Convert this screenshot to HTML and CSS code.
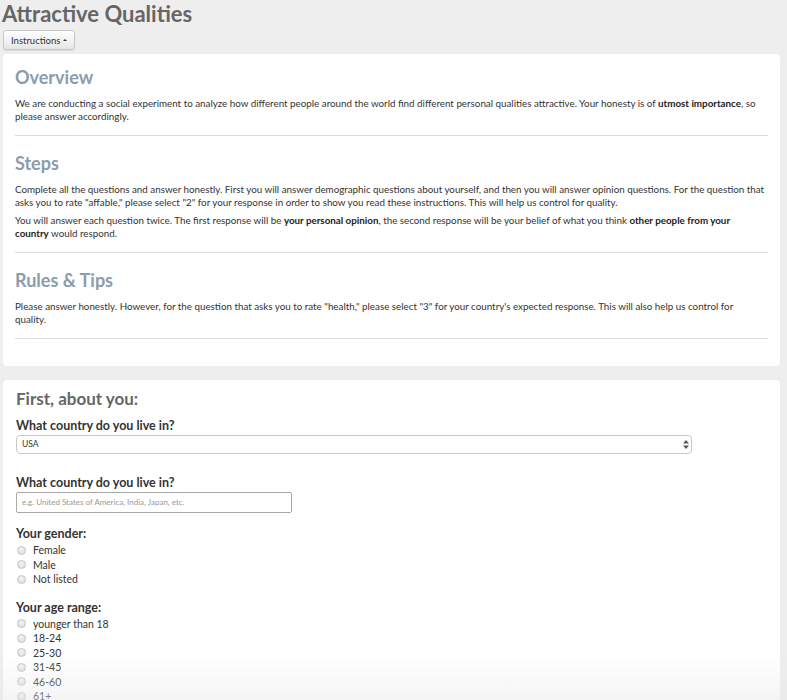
FILE: index.html
```html
<!DOCTYPE html>
<html>
<head>
<meta charset="utf-8">
<link rel="stylesheet" href="styles.css">
</head>
<body>
<div class="page">
  <h1 class="title">Attractive Qualities</h1>
  <button class="btn">Instructions <span class="caret"></span></button>

  <div class="panel panel-instr">
    <h2 class="sec-head">Overview</h2>
    <p>We are conducting a social experiment to analyze how different people around the world find different personal qualities attractive. Your honesty is of <b>utmost importance</b>, so please answer accordingly.</p>
    <hr>
    <h2 class="sec-head">Steps</h2>
    <p>Complete all the questions and answer honestly. First you will answer demographic questions about yourself, and then you will answer opinion questions. For the question that asks you to rate "affable," please select "2" for your response in order to show you read these instructions. This will help us control for quality.</p>
    <p>You will answer each question twice. The first response will be <b>your personal opinion</b>, the second response will be your belief of what you think <b>other people from your country</b> would respond.</p>
    <hr>
    <h2 class="sec-head">Rules &amp; Tips</h2>
    <p>Please answer honestly. However, for the question that asks you to rate "health," please select "3" for your country's expected response. This will also help us control for quality.</p>
    <hr>
  </div>

  <div class="panel panel-form">
    <h2 class="form-head">First, about you:</h2>

    <div class="q q-first">
      <label class="q-label">What country do you live in?</label>
      <div class="select-wrap">
        <div class="select">USA</div>
        <svg class="arrows" width="6" height="9" viewBox="0 0 6 9"><path d="M3 0 L6 3.5 L0 3.5 Z M3 9 L6 5.5 L0 5.5 Z" fill="#555"/></svg>
      </div>
    </div>

    <div class="q q-text">
      <label class="q-label">What country do you live in?</label>
      <div class="input">e.g. United States of America, India, Japan, etc.</div>
    </div>

    <div class="q q-after-input">
      <label class="q-label">Your gender:</label>
      <div class="radio"><span class="dot"></span>Female</div>
      <div class="radio"><span class="dot"></span>Male</div>
      <div class="radio"><span class="dot"></span>Not listed</div>
    </div>

    <div class="q q-after-radio">
      <label class="q-label">Your age range:</label>
      <div class="radio"><span class="dot"></span>younger than 18</div>
      <div class="radio"><span class="dot"></span>18-24</div>
      <div class="radio"><span class="dot"></span>25-30</div>
      <div class="radio"><span class="dot"></span>31-45</div>
      <div class="radio"><span class="dot"></span>46-60</div>
      <div class="radio"><span class="dot"></span>61+</div>
    </div>
  </div>
</div>
<div class="fade"></div>
</body>
</html>
```

FILE: styles.css
```css
html, body {
  margin: 0;
  padding: 0;
}
body {
  background: #eeeeee;
  font-family: Lato, "Open Sans", sans-serif;
  color: #333;
  overflow: hidden;
}
.page {
  padding: 0 7px 0 3px;
}
.title {
  margin: 0;
  margin-left: -1px;
  font-size: 22px;
  line-height: 27px;
  font-weight: 700;
  color: #666;
}
.btn {
  display: inline-flex;
  align-items: center;
  gap: 3px;
  margin-top: 3px;
  height: 20px;
  padding: 0 7px;
  font-family: Lato, sans-serif;
  font-size: 9.5px;
  color: #333;
  background: linear-gradient(#ffffff, #e6e6e6);
  border: 1px solid #c8c8c8;
  border-radius: 3px;
  box-shadow: 0 1px 1px rgba(0,0,0,0.08);
}
.caret {
  width: 0;
  height: 0;
  border-left: 2px solid transparent;
  border-right: 2px solid transparent;
  border-bottom: 2px solid #333;
}
.panel {
  background: #fff;
  border-radius: 4px;
}
.panel-instr {
  margin-top: 4px;
  padding: 11px 12px 27px 12px;
}
.sec-head {
  margin: 0;
  font-size: 18px;
  line-height: 24px;
  font-weight: 700;
  color: #8b9cac;
}
.panel-instr p {
  margin: 8px 3px 0 0;
  font-size: 9.8px;
  line-height: 13px;
}
.panel-instr p + p {
  margin-top: 5px;
}
.panel-instr b {
  color: #222;
}
hr {
  border: 0;
  border-top: 1px solid #dcdce0;
  margin: 12px 0 15px 0;
}
.panel-instr hr:last-child {
  margin-bottom: 0;
}
.panel-form {
  margin-top: 14px;
  padding: 8px 13px 40px 13px;
  min-height: 400px;
}
.form-head {
  margin: 0;
  font-size: 17px;
  line-height: 22px;
  font-weight: 700;
  color: #666;
}
.q-first {
  margin-top: 8px;
}
.q-text {
  margin-top: 21px;
}
.q-after-input {
  margin-top: 13px;
}
.q-after-radio {
  margin-top: 13px;
}
.q-label {
  display: block;
  font-size: 12.5px;
  line-height: 16px;
  font-weight: 700;
  color: #333;
}
.select-wrap {
  position: relative;
  width: 676px;
  margin-top: 1px;
}
.select {
  height: 19px;
  box-sizing: border-box;
  border: 1px solid #c9c9c9;
  border-radius: 4px;
  font-size: 8.5px;
  line-height: 17px;
  padding-left: 5px;
  color: #333;
  background: #fff;
}
.arrows {
  position: absolute;
  right: 3px;
  top: 5px;
}
.input {
  width: 276px;
  height: 21px;
  box-sizing: border-box;
  margin-top: 1px;
  border: 1px solid #a9a9a9;
  border-radius: 2px;
  font-size: 8px;
  line-height: 19px;
  padding-left: 5px;
  color: #999;
}
.radio {
  display: flex;
  align-items: center;
  font-size: 10.5px;
  line-height: 14.5px;
  color: #333;
}
.q-label + .radio {
  margin-top: 1px;
}
.dot {
  width: 7px;
  height: 7px;
  border-radius: 50%;
  border: 1px solid #c4c4c4;
  background: radial-gradient(circle at 50% 35%, #f4f4f4, #d8d8d8);
  margin: 0 7px 0 1px;
}
.fade {
  position: fixed;
  left: 0;
  right: 0;
  bottom: 0;
  height: 45px;
  background: linear-gradient(rgba(238,238,238,0), rgba(232,232,232,0.45));
  pointer-events: none;
}
```
